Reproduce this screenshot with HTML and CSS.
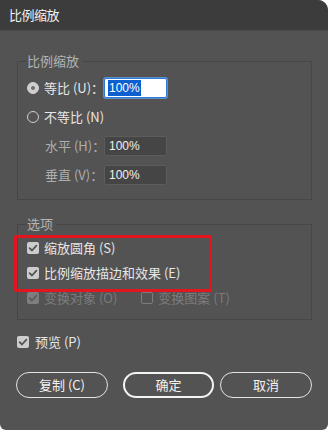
FILE: index.html
```html
<!DOCTYPE html>
<html lang="zh">
<head>
<meta charset="utf-8">
<link rel="stylesheet" href="styles.css">
</head>
<body>
<div class="dialog">
  <div class="titlebar">比例缩放</div>
  <div class="content">
    <fieldset class="group g1">
      <legend>比例缩放</legend>
      <div class="row">
        <span class="radio on"></span>
        <span class="label">等比 (U)：</span>
        <span class="input focus"><span class="sel">100%</span></span>
      </div>
      <div class="row">
        <span class="radio"></span>
        <span class="label">不等比 (N)</span>
      </div>
      <div class="row sub">
        <span class="label dim">水平 (H)：</span>
        <span class="input">100%</span>
      </div>
      <div class="row sub">
        <span class="label dim">垂直 (V)：</span>
        <span class="input">100%</span>
      </div>
    </fieldset>
    <fieldset class="group g2">
      <legend>选项</legend>
      <div class="row">
        <span class="check on"><svg viewBox="0 0 12 12"><path d="M2.6 6.2 L5 8.5 L9.4 3.6" /></svg></span>
        <span class="label">缩放圆角 (S)</span>
      </div>
      <div class="row">
        <span class="check on"><svg viewBox="0 0 12 12"><path d="M2.6 6.2 L5 8.5 L9.4 3.6" /></svg></span>
        <span class="label">比例缩放描边和效果 (E)</span>
      </div>
      <div class="row">
        <span class="check on disabled"><svg viewBox="0 0 12 12"><path d="M2.6 6.2 L5 8.5 L9.4 3.6" /></svg></span>
        <span class="label off">变换对象 (O)</span>
        <span class="check empty"></span>
        <span class="label off">变换图案 (T)</span>
      </div>
      <div class="highlight"></div>
    </fieldset>
    <div class="row preview">
      <span class="check on"><svg viewBox="0 0 12 12"><path d="M2.6 6.2 L5 8.5 L9.4 3.6" /></svg></span>
      <span class="label">预览 (P)</span>
    </div>
    <div class="buttons">
      <button class="btn b1">复制 (C)</button>
      <button class="btn b2 default">确定</button>
      <button class="btn b3">取消</button>
    </div>
  </div>
</div>
</body>
</html>
```
FILE: styles.css
```css
html, body {
  margin: 0;
  padding: 0;
  background: #ffffff;
}
body {
  width: 328px;
  height: 430px;
  overflow: hidden;
  font-family: "Noto Sans CJK SC", "Liberation Sans", sans-serif;
  font-size: 13px;
  color: #e6e6e6;
}
.dialog {
  width: 328px;
  height: 430px;
  background: #535353;
  border-radius: 0 10px 6px 6px;
  overflow: hidden;
  display: flex;
  flex-direction: column;
}
.titlebar {
  height: 31px;
  background: #3c3c3c;
  color: #f2f2f2;
  font-size: 13px;
  line-height: 30px;
  padding-left: 9px;
  letter-spacing: -0.5px;
  flex: none;
  box-sizing: border-box;
  border-bottom: 1px solid #4a4a4a;
}
.content {
  padding: 21px 16px 0 17px;
  display: flex;
  flex-direction: column;
}
.group {
  margin: 0;
  border: 1px solid #474747;
  padding: 0 9px;
  position: relative;
  min-width: 0;
}
.group legend {
  padding: 0 3px 0 0;
  margin-left: 0;
  color: #b4b4b4;
  font-size: 13px;
  line-height: 18px;
  height: 18px;
}
.g1 {
  display: grid;
  grid-template-rows: 20px 20px 20px 20px;
  row-gap: 9px;
  padding-top: 8px;
  padding-bottom: 14px;
}
.g1 .row, .g2 .row, .preview {
  display: flex;
  align-items: center;
  height: 20px;
}
.g2 {
  margin-top: 15px;
  padding-top: 5px;
  padding-bottom: 11px;
  display: flex;
  flex-direction: column;
  gap: 5px;
}
.label {
  line-height: 20px;
  white-space: nowrap;
}
.row .radio, .row .check {
  margin-right: 5px;
}
.g1 .row .label {
  width: 60px;
}
.g1 .row.sub {
  padding-left: 18px;
}
.g1 .row.sub .label {
  width: 59px;
}
.dim {
  color: #aeaeae;
}
.off {
  color: #7c7c7c;
}
.radio {
  width: 12px;
  height: 12px;
  border-radius: 50%;
  box-sizing: border-box;
  border: 1.5px solid #cfcfcf;
  background: #535353;
  flex: none;
  position: relative;
}
.radio.on {
  background: #cfcfcf;
  border-color: #cfcfcf;
}
.radio.on::after {
  content: "";
  position: absolute;
  left: 2.5px;
  top: 2.5px;
  width: 4px;
  height: 4px;
  border-radius: 50%;
  background: #6e6e6e;
}
.check {
  width: 12px;
  height: 12px;
  border-radius: 2px;
  background: #cdcdcd;
  flex: none;
  display: flex;
  box-sizing: border-box;
}
.check svg {
  width: 12px;
  height: 12px;
}
.check path {
  fill: none;
  stroke: #555555;
  stroke-width: 1.8;
  stroke-linecap: round;
  stroke-linejoin: round;
}
.check.disabled {
  background: #7e7e7e;
}
.check.disabled path {
  stroke: #5c5c5c;
}
.check.empty {
  background: transparent;
  border: 1px solid #7c7c7c;
  margin-left: 24px;
}
.input {
  width: 63px;
  height: 20px;
  box-sizing: border-box;
  background: #454545;
  border: 1px solid #5c5c5c;
  border-radius: 2px;
  color: #f0f0f0;
  font-family: "Liberation Sans", sans-serif;
  font-size: 12px;
  line-height: 18px;
  padding-left: 4px;
}
.input.focus {
  background: #ffffff;
  border: 1px solid #2d7ad6;
  box-shadow: 0 0 0 1px #5e8fc8;
  padding-left: 3px;
}
.sel {
  background: #0b5fd1;
  color: #ffffff;
  padding: 1px 1px 1px 1px;
}
.highlight {
  position: absolute;
  left: -4px;
  top: 2px;
  width: 198px;
  height: 57px;
  box-sizing: border-box;
  border: 3px solid #e3151f;
  border-radius: 2px;
  pointer-events: none;
}
.preview {
  margin-top: 12px;
}
.preview .check {
  margin-right: 6px;
}
.buttons {
  display: flex;
  margin-top: 20px;
  margin-left: -1px;
}
.btn {
  height: 26px;
  box-sizing: border-box;
  border: 1.5px solid #e4e4e4;
  border-radius: 13px;
  background: transparent;
  color: #f2f2f2;
  font-family: "Noto Sans CJK SC", "Liberation Sans", sans-serif;
  font-size: 13px;
  padding: 0;
  line-height: 22px;
}
.b1 { width: 92px; }
.b2 { width: 91px; margin-left: 15px; }
.b3 { width: 92px; margin-left: 6px; }
.btn.default {
  border: 2px solid #f4f4f4;
}
```
